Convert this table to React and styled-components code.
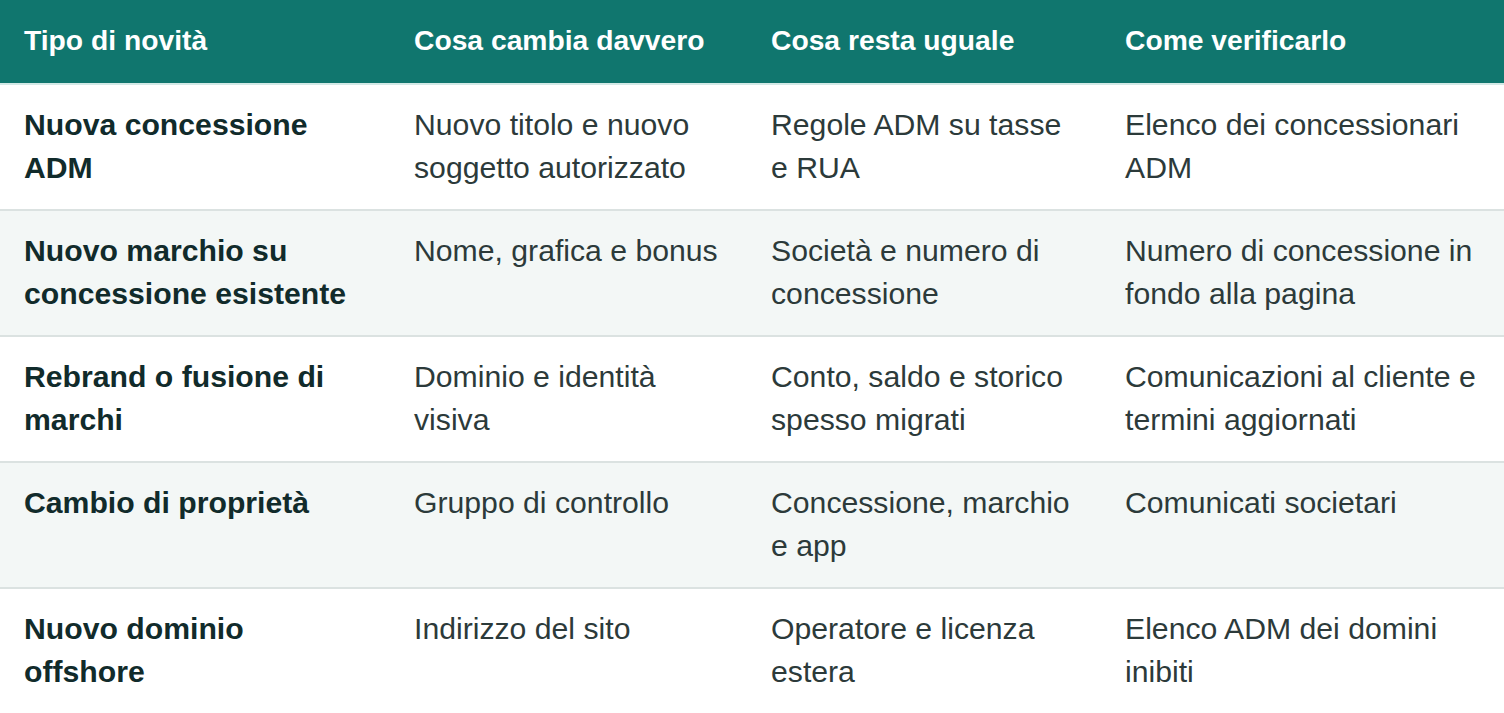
import React from "react";
import styled, { createGlobalStyle } from "styled-components";

const Global = createGlobalStyle`
  html, body { margin: 0; padding: 0; background: #ffffff; }
  body { font-family: "Liberation Sans", Arial, sans-serif; }
`;

const Table = styled.table`
  width: 1504px;
  border-collapse: collapse;
  table-layout: fixed;
  font-family: "Liberation Sans", Arial, sans-serif;
`;

const HeadRow = styled.tr`
  background: #10766e;
  border-bottom: 2px solid #d3e9e6;
`;

const Th = styled.th`
  text-align: left;
  color: #ffffff;
  font-size: 28.25px;
  font-weight: 700;
  line-height: 43px;
  padding: 19px 24px 21px;
  vertical-align: middle;
`;

const Row = styled.tr`
  background: ${(p) => (p.$alt ? "#f3f7f6" : "#ffffff")};
  border-bottom: 2px solid #dbe2e1;
  &:last-child { border-bottom: none; }
`;

const Td = styled.td`
  font-size: 30.2px;
  line-height: 43px;
  padding: 18px 24px 20px;
  vertical-align: top;
  color: ${(p) => (p.$lead ? "#112b2b" : "#2c3a3a")};
  font-weight: ${(p) => (p.$lead ? 700 : 400)};
`;

const cols = [390, 357, 354, 403];
const head = ["Tipo di novità", "Cosa cambia davvero", "Cosa resta uguale", "Come verificarlo"];
const rows = [
  ["Nuova concessione ADM", "Nuovo titolo e nuovo soggetto autorizzato", "Regole ADM su tasse e RUA", "Elenco dei concessionari ADM"],
  ["Nuovo marchio su concessione esistente", "Nome, grafica e bonus", "Società e numero di concessione", "Numero di concessione in fondo alla pagina"],
  ["Rebrand o fusione di marchi", "Dominio e identità visiva", "Conto, saldo e storico spesso migrati", "Comunicazioni al cliente e termini aggiornati"],
  ["Cambio di proprietà", "Gruppo di controllo", "Concessione, marchio e app", "Comunicati societari"],
  ["Nuovo dominio offshore", "Indirizzo del sito", "Operatore e licenza estera", "Elenco ADM dei domini inibiti"],
];

export default function App() {
  return (
    <>
      <Global />
      <Table>
        <colgroup>
          {cols.map((w, i) => (
            <col key={i} style={{ width: w }} />
          ))}
        </colgroup>
        <thead>
          <HeadRow>
            {head.map((h) => (
              <Th key={h}>{h}</Th>
            ))}
          </HeadRow>
        </thead>
        <tbody>
          {rows.map((r, i) => (
            <Row key={i} $alt={i % 2 === 1}>
              {r.map((c, j) => (
                <Td key={j} $lead={j === 0}>{c}</Td>
              ))}
            </Row>
          ))}
        </tbody>
      </Table>
    </>
  );
}
